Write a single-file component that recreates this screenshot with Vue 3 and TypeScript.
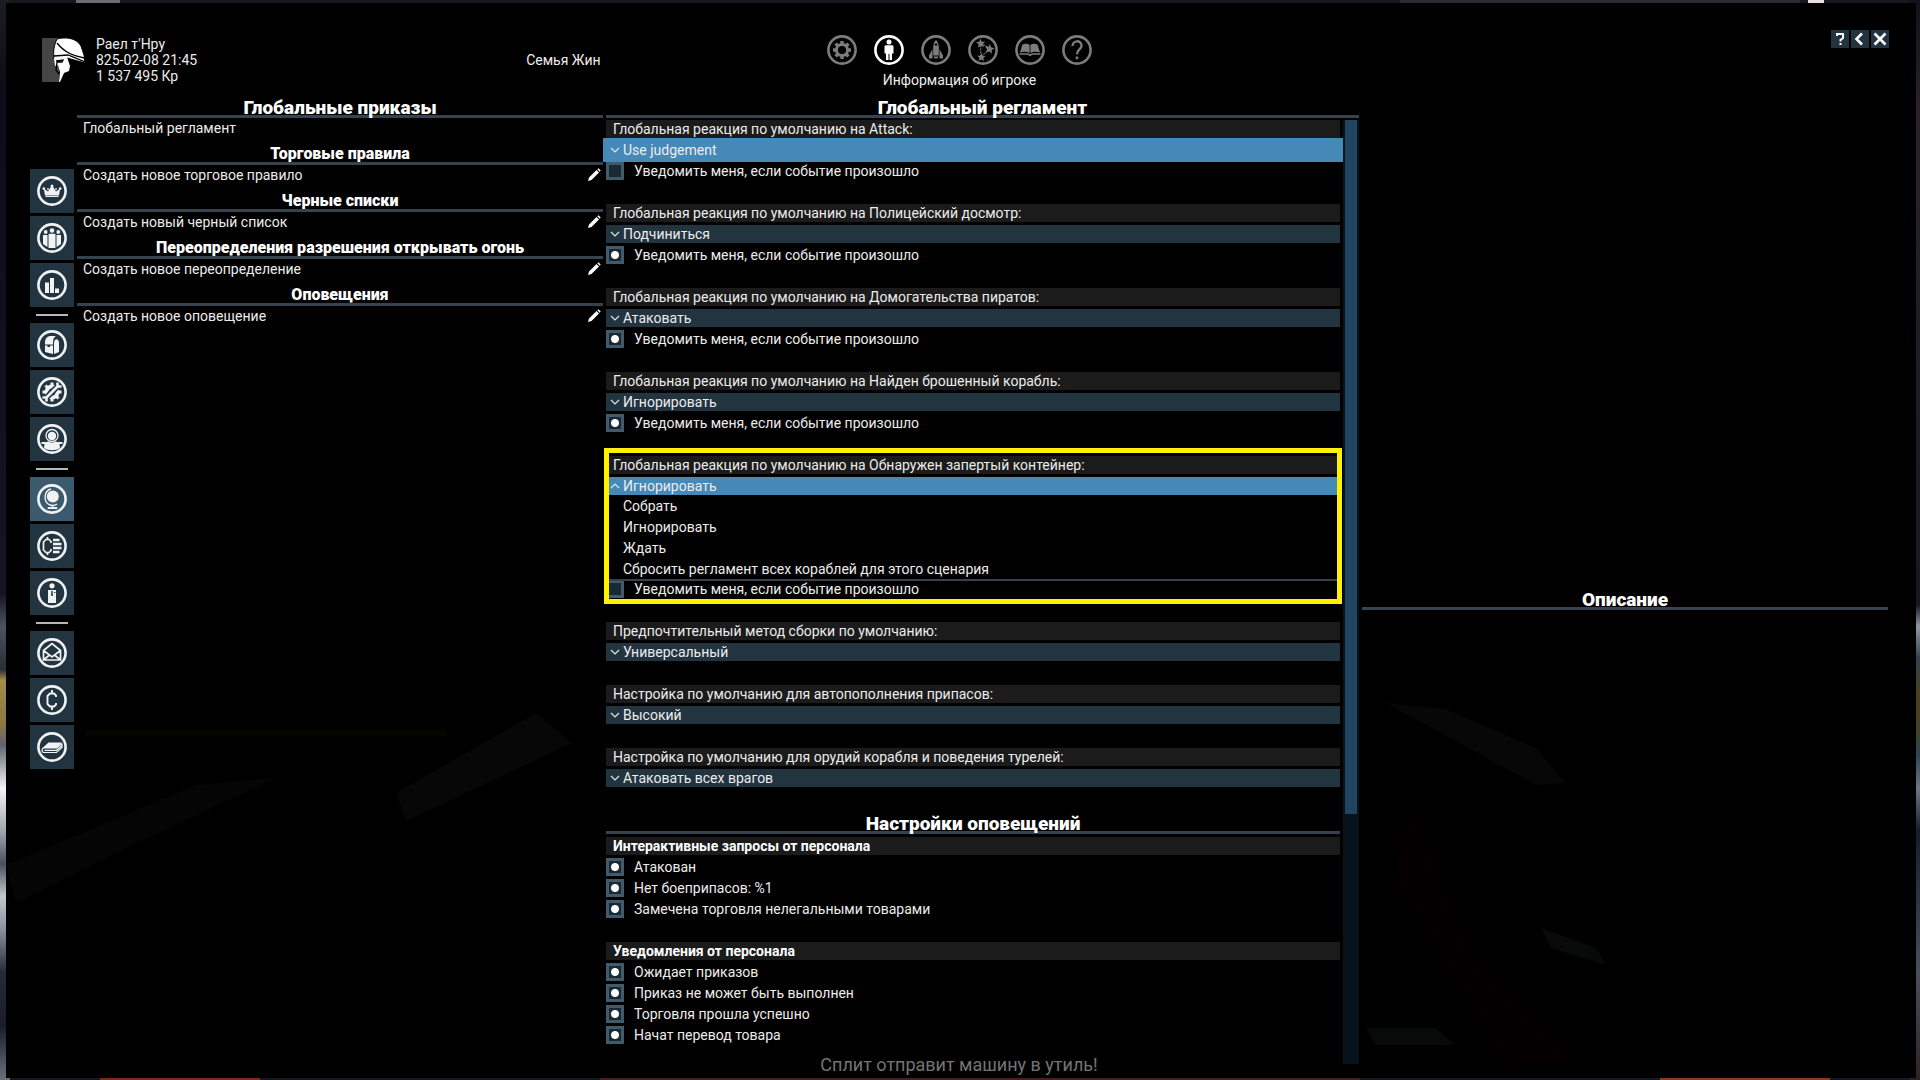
<script setup lang="ts">
import { ref } from 'vue'

interface Rule { heading: string; action: string }
interface Reaction {
  id: string
  label: string
  value: string
  choices: string[]
  notify?: boolean
  hot?: boolean
  open?: boolean
}
interface AlertGroup { title: string; items: { id: string; label: string; on: boolean }[] }

const tabs = [
  { id: 'settings', label: 'Настройки' },
  { id: 'player', label: 'Информация об игроке' },
  { id: 'ship', label: 'Корабль' },
  { id: 'map', label: 'Карта' },
  { id: 'book', label: 'Энциклопедия' },
  { id: 'help', label: 'Справка' },
]
const activeTab = ref('player')

const sidebar = [
  [
    { id: 'crown', label: 'Империя' },
    { id: 'factions', label: 'Фракции' },
    { id: 'stats', label: 'Статистика' },
  ],
  [
    { id: 'inventory', label: 'Инвентарь' },
    { id: 'crafting', label: 'Создание' },
    { id: 'crew', label: 'Внешность' },
  ],
  [
    { id: 'globe', label: 'Глобальные приказы' },
    { id: 'account', label: 'Счета' },
    { id: 'staff', label: 'Персонал' },
  ],
  [
    { id: 'mail', label: 'Сообщения' },
    { id: 'credit', label: 'Транзакции' },
    { id: 'log', label: 'Журнал' },
  ],
]
const activeSide = ref('globe')

const rules: Rule[] = [
  { heading: 'Торговые правила', action: 'Создать новое торговое правило' },
  { heading: 'Черные списки', action: 'Создать новый черный список' },
  { heading: 'Переопределения разрешения открывать огонь', action: 'Создать новое переопределение' },
  { heading: 'Оповещения', action: 'Создать новое оповещение' },
]

const reactions = ref<Reaction[]>([
  { id: 'attack', label: 'Глобальная реакция по умолчанию на Attack:', value: 'Use judgement', choices: ['Use judgement'], notify: false, hot: true },
  { id: 'police', label: 'Глобальная реакция по умолчанию на Полицейский досмотр:', value: 'Подчиниться', choices: ['Подчиниться'], notify: true },
  { id: 'pirates', label: 'Глобальная реакция по умолчанию на Домогательства пиратов:', value: 'Атаковать', choices: ['Атаковать'], notify: true },
  { id: 'ship', label: 'Глобальная реакция по умолчанию на Найден брошенный корабль:', value: 'Игнорировать', choices: ['Игнорировать'], notify: true },
  {
    id: 'lockbox',
    label: 'Глобальная реакция по умолчанию на Обнаружен запертый контейнер:',
    value: 'Игнорировать',
    choices: ['Собрать', 'Игнорировать', 'Ждать', 'Сбросить регламент всех кораблей для этого сценария'],
    notify: false,
    open: true,
  },
  { id: 'build', label: 'Предпочтительный метод сборки по умолчанию:', value: 'Универсальный', choices: ['Универсальный'] },
  { id: 'supply', label: 'Настройка по умолчанию для автопополнения припасов:', value: 'Высокий', choices: ['Высокий'] },
  { id: 'guns', label: 'Настройка по умолчанию для орудий корабля и поведения турелей:', value: 'Атаковать всех врагов', choices: ['Атаковать всех врагов'] },
])

const alerts = ref<AlertGroup[]>([
  {
    title: 'Интерактивные запросы от персонала',
    items: [
      { id: 'attacked', label: 'Атакован', on: true },
      { id: 'ammo', label: 'Нет боеприпасов: %1', on: true },
      { id: 'illegal', label: 'Замечена торговля нелегальными товарами', on: true },
    ],
  },
  {
    title: 'Уведомления от персонала',
    items: [
      { id: 'waiting', label: 'Ожидает приказов', on: true },
      { id: 'failed', label: 'Приказ не может быть выполнен', on: true },
      { id: 'traded', label: 'Торговля прошла успешно', on: true },
      { id: 'transfer', label: 'Начат перевод товара', on: true },
    ],
  },
])
</script>

<template>
  <div class="space">
    <svg class="stars" viewBox="0 0 1920 1080" preserveAspectRatio="none" aria-hidden="true">
      <defs>
        <linearGradient id="glow-left" x1="0" y1="0" x2="0" y2="1">
          <stop offset="0" stop-color="#1c1d24" />
          <stop offset="0.08" stop-color="#0c0d16" />
          <stop offset="0.55" stop-color="#14161f" />
          <stop offset="0.58" stop-color="#4d535e" />
          <stop offset="0.62" stop-color="#2a2d36" />
          <stop offset="0.63" stop-color="#a58c46" />
          <stop offset="0.67" stop-color="#8b7942" />
          <stop offset="0.69" stop-color="#5e6570" />
          <stop offset="0.73" stop-color="#f4f4f6" />
          <stop offset="0.77" stop-color="#9fa4ac" />
          <stop offset="0.8" stop-color="#4a505b" />
          <stop offset="0.83" stop-color="#c4c8ce" />
          <stop offset="0.86" stop-color="#8d939d" />
          <stop offset="0.9" stop-color="#272b35" />
          <stop offset="0.95" stop-color="#1a1d26" />
          <stop offset="1" stop-color="#6b7079" />
        </linearGradient>
        <linearGradient id="glow-right" x1="0" y1="0" x2="0" y2="1">
          <stop offset="0" stop-color="#12121a" />
          <stop offset="0.1" stop-color="#2a2228" />
          <stop offset="0.56" stop-color="#171722" />
          <stop offset="0.58" stop-color="#8f97a2" />
          <stop offset="0.61" stop-color="#33404a" />
          <stop offset="0.64" stop-color="#4c3f26" />
          <stop offset="0.67" stop-color="#45401f" />
          <stop offset="0.7" stop-color="#2b4654" />
          <stop offset="0.73" stop-color="#6f7582" />
          <stop offset="0.77" stop-color="#141c2a" />
          <stop offset="0.9" stop-color="#4a4f5c" />
          <stop offset="1" stop-color="#2c2226" />
        </linearGradient>
      </defs>
      <rect width="1920" height="1080" fill="#16171f" />
      <rect width="10" height="1080" fill="url(#glow-left)" />
      <rect x="1910" width="10" height="1080" fill="url(#glow-right)" />
      <rect x="76" y="0" width="44" height="3" fill="#6c6d74" />
      <rect x="1400" y="0" width="400" height="3" fill="#2c2b31" />
      <rect x="1808" y="0" width="16" height="3" fill="#e6dfe6" />
      <rect x="100" y="1078" width="160" height="2" fill="#7a2a1c" />
      <rect x="600" y="1078" width="760" height="2" fill="#4a1c24" />
      <rect x="1660" y="1078" width="170" height="2" fill="#8a3a20" />
    </svg>

    <div class="panel">
      <svg class="cockpit" viewBox="0 0 1910 1075" preserveAspectRatio="none" aria-hidden="true">
        <path d="M390 790 530 710 566 740 400 818Z" fill="#070707" />
        <path d="M1380 700 1440 706 1530 745 1560 780 1530 782Z" fill="#070707" />
        <path d="M0 862 190 782 270 775 110 850 10 900Z" fill="#050505" />
        <path d="M1360 1025H1430L1450 1042H1370Z M1535 925 1590 945 1600 962 1545 945Z" fill="#080909" />
        <path d="M80 730H440" stroke="#070500" stroke-width="6" />
        <path d="M1400 790 1470 960 1570 1060H1500L1390 880Z" fill="#040001" />
      </svg>

      <header class="top">
        <div class="identity">
          <svg class="portrait" viewBox="0 0 43 44" aria-hidden="true">
            <rect width="17" height="44" fill="#454545" />
            <path d="M15 1C22-1 34-1 39 8L42 17 43 25 25 20 12 21C11 14 12 7 15 1Z" fill="#fff" stroke="#000" stroke-width="1" />
            <path d="M12 20 25 19 28 28 27 33 22 35 18 44H17L18 34 16 27 13 28Z" fill="#fff" />
            <path d="M15 5C23 15 32 18 42 20M12 18 26 17 43 24M14 23 21 22 20 24H15M15 24 14 32 17 36" fill="none" stroke="#000" stroke-width="1.3" />
          </svg>
          <div class="facts">
            <div>Раел т'Нру</div>
            <div>825-02-08 21:45</div>
            <div>1 537 495 Кр</div>
          </div>
          <div class="family">Семья Жин</div>
        </div>

        <div class="middle">
          <nav class="tabs" aria-label="Разделы">
            <button
              v-for="tab in tabs"
              :key="tab.id"
              type="button"
              class="tab"
              :class="{ active: tab.id === activeTab }"
              :aria-label="tab.label"
              @click="activeTab = tab.id"
            >
              <svg viewBox="0 0 30 30">
                <circle cx="15" cy="15" r="13.6" class="ring" />
                <template v-if="tab.id === 'settings'">
                  <circle cx="15" cy="15" r="5.6" fill="none" stroke="currentColor" stroke-width="3" />
                  <path d="M15 6V9M15 21V24M6 15H9M21 15H24M8.6 8.6 10.8 10.8M19.2 19.2 21.4 21.4M8.6 21.4 10.8 19.2M19.2 10.8 21.4 8.6" stroke="currentColor" stroke-width="3.4" />
                </template>
                <template v-else-if="tab.id === 'player'">
                  <circle cx="15" cy="7" r="2.5" />
                  <path d="M11.5 10.3H18.5L19.5 11.3V18.5H18V25H15.5V19H14.5V25H12V18.5H10.5V11.3Z" />
                </template>
                <template v-else-if="tab.id === 'ship'">
                  <path d="M15 5C17 7 17.8 9.5 17.8 12V20.5H12.2V12C12.2 9.500 13 7 15 5Z" />
                  <path d="M13.600 10.500 14 8.500H16L16.400 10.500Z" fill="#000" />
                  <path d="M11.500 14V23.500H8V20.500ZM18.500 14V23.500H22V20.500ZM12.500 21.500H17.500L16.500 23.500H13.500Z" />
                </template>
                <template v-else-if="tab.id === 'map'">
                  <path d="M12.500 8 22 13.500 13 22Z" fill="none" stroke="currentColor" stroke-width="1.100" stroke-dasharray="2 1" />
                  <path d="M12.500 3.500 13.700 6.800 17.200 6.600 14.700 9.200 16 12.300 12.800 10.800 9.800 12.600 10.600 9.200 8 7.200 11.300 6.800Z" />
                  <path d="M22 8.800 23 12.200 26.500 13.300 23.700 15.200 23.800 18.700 21.200 16.500 17.800 17.600 19.100 14.300 17 11.600 20.500 11.800Z" />
                  <path d="M13.500 18 14.600 20.700 17.600 21 15.300 23 16 26 13.400 24.400 10.600 26 11.500 22.900 9.300 20.800 12.300 20.700Z" />
                </template>
                <template v-else-if="tab.id === 'book'">
                  <path d="M5 17.500 7.500 9.500C10 8.300 13 8.500 14.600 10V18C12 16.600 8 16.500 5 17.500ZM25 17.500 22.500 9.500C20 8.300 17 8.500 15.400 10V18C18 16.600 22 16.500 25 17.500Z" />
                  <path d="M4.500 19H13L15 20.300 17 19H25.500" fill="none" stroke="currentColor" stroke-width="1.600" />
                </template>
                <template v-else>
                  <path d="M10.500 11C10.500 4.800 19.500 4.800 19.500 10.800 19.500 14.500 15 14.500 15 19.200" fill="none" stroke="currentColor" stroke-width="2.400" />
                  <rect x="13.700" y="21.500" width="2.600" height="2.800" />
                </template>
              </svg>
            </button>
          </nav>
          <div class="tab-name">Информация об игроке</div>
        </div>

        <div class="window-buttons">
          <button type="button" aria-label="Справка"><svg viewBox="0 0 18 18"><path d="M6 6V4H12V8L9.500 10V11.500M9.500 13V15" /></svg></button>
          <button type="button" aria-label="Назад"><svg viewBox="0 0 18 18"><path d="M11 3.500 5.500 9 11 14.500" class="thick" /></svg></button>
          <button type="button" aria-label="Закрыть"><svg viewBox="0 0 18 18"><path d="M3.500 3.500 14.500 14.500M14.500 3.500 3.500 14.500" class="thick" /></svg></button>
        </div>
      </header>

      <div class="columns">
        <nav class="side" aria-label="Меню игрока">
          <div v-for="(group, g) in sidebar" :key="g" class="side-group">
            <button
              v-for="item in group"
              :key="item.id"
              type="button"
              class="side-button"
              :class="{ active: item.id === activeSide }"
              :aria-label="item.label"
              @click="activeSide = item.id"
            >
              <svg viewBox="0 0 30 30">
                <circle cx="15" cy="15" r="13.600" class="ring" />
                <template v-if="item.id === 'crown'">
                  <path d="M8 19.500 6.800 12.500 11 15.500 14.500 10H15.500L19 15.500 23.200 12.500 22 19.500ZM8.500 20H21.500V21H8.500Z" />
                  <circle cx="15" cy="10" r="1.500" /><circle cx="6.800" cy="12.600" r="1.300" /><circle cx="23.200" cy="12.600" r="1.300" />
                  <circle cx="11" cy="13" r="0.900" /><circle cx="19" cy="13" r="0.900" />
                </template>
                <template v-else-if="item.id === 'factions'">
                  <circle cx="15" cy="7.500" r="2.300" /><circle cx="8.700" cy="9" r="1.900" /><circle cx="21.300" cy="9" r="1.900" />
                  <path d="M12 10.700H18L18.500 11.500V25H11.500V11.500ZM6 12H10.500V24L6 21ZM24 12H19.500V24L24 21Z" />
                </template>
                <template v-else-if="item.id === 'stats'">
                  <path d="M8 12.500H12V23H8ZM13 8H17V23H13ZM18 18.500H22V23H18Z" />
                </template>
                <template v-else-if="item.id === 'inventory'">
                  <path d="M8 13C8 8.500 10 6.500 13 6H19C16.500 7.500 16 9.500 16 13V14.500H8ZM17 13C17 8 22 8 22 13V22L17 24ZM8 15.500H10.500V17H13V15.500H16V24L8 22Z" />
                </template>
                <template v-else-if="item.id === 'crafting'">
                  <circle cx="15" cy="15" r="5.500" fill="none" stroke="currentColor" stroke-width="4" />
                  <path d="M15 5.500V9M15 21V24.500M8.500 8.500 11 11M19 19 21.500 21.500M5.500 15H9M21 15H24.500" stroke="currentColor" stroke-width="3" />
                  <path d="M7 23 23 7" stroke="#223440" stroke-width="6" />
                  <path d="M9.500 20.500 20.500 9.500M5.500 20.500H9.500V24.500M20.500 5.500V9.500H24.500" fill="none" stroke="currentColor" stroke-width="2.600" />
                </template>
                <template v-else-if="item.id === 'crew'">
                  <circle cx="15" cy="11.500" r="6" fill="none" stroke="currentColor" stroke-width="1.300" />
                  <circle cx="15" cy="12" r="4.200" />
                  <path d="M15 2V6M4.500 18H9.500L11.500 17.500C13.500 19 16.500 19 18.500 17.500L20.500 18H25.500V20H22.500L23 24C19 27 11 27 7 24L7.500 20H4.500Z" />
                </template>
                <template v-else-if="item.id === 'globe'">
                  <circle cx="15.800" cy="12.500" r="6" />
                  <path d="M14 5C6.500 7 6.500 17.500 12 20.500 14.500 21.700 18 21.500 20 20M15.500 21V23.500" fill="none" stroke="currentColor" stroke-width="1.400" />
                  <path d="M11 23H20L20.500 25H10.500Z" />
                </template>
                <template v-else-if="item.id === 'account'">
                  <path d="M14 12V10.500L12 8.500H9L6.500 11V19L9 21.500H12L14 19.500V18M10.500 6V8.500M10.500 21.500V24" fill="none" stroke="currentColor" stroke-width="1.700" />
                  <path d="M16 9H22.500M16 13H24.500M16 17H24.500M16 21H22.500" stroke="currentColor" stroke-width="2.400" />
                </template>
                <template v-else-if="item.id === 'staff'">
                  <circle cx="15" cy="7.800" r="2.600" />
                  <path d="M11 12H19V25H11Z" />
                  <path d="M15 13 14.500 17 15 18 15.500 17ZM17 14.500H18.500" fill="none" stroke="#223440" stroke-width="0.900" />
                </template>
                <template v-else-if="item.id === 'mail'">
                  <path d="M6.500 12.500 15 5.500 23.500 12.500V22H6.500ZM6.500 12.500 15 19 23.500 12.500M6.500 22 12.500 17M23.500 22 17.500 17" fill="none" stroke="currentColor" stroke-width="1.700" />
                </template>
                <template v-else-if="item.id === 'credit'">
                  <path d="M19 12V10.500L17 8.500H13L10.500 11V19L13 21.500H17L19 19.500V18M15 5V8.500M15 21.500V25" fill="none" stroke="currentColor" stroke-width="1.900" />
                </template>
                <template v-else>
                  <path d="M5.500 16 11.500 10.500H25L19.500 16Z" />
                  <path d="M25 11.500V15.500L19.500 20.500H7C4.500 20.500 4.500 16 7 16H19.500L25 11.500M7.500 18.300H19.500L25 13.500" fill="none" stroke="currentColor" stroke-width="1.200" />
                </template>
              </svg>
            </button>
          </div>
        </nav>

        <section class="orders">
          <h2 class="title">Глобальные приказы</h2>
          <a href="#" class="order" @click.prevent>Глобальный регламент</a>
          <template v-for="rule in rules" :key="rule.heading">
            <h3 class="title small">{{ rule.heading }}</h3>
            <a href="#" class="order" @click.prevent>
              <span>{{ rule.action }}</span>
              <svg class="pencil" viewBox="0 0 14 14" aria-hidden="true">
                <path d="M1 13 2 9.500 9.500 2 12 4.500 4.500 12ZM10.300 1.300 11.500 0.300 13.700 2.500 12.700 3.700Z" />
              </svg>
            </a>
          </template>
        </section>

        <main class="rules">
          <h2 class="title">Глобальный регламент</h2>
          <div class="scroller">
            <div class="list">
              <section v-for="r in reactions" :key="r.id" class="reaction" :class="{ framed: r.open }">
                <label class="caption" :for="r.id">{{ r.label }}</label>
                <div v-if="!r.open" class="drop" :class="{ hot: r.hot }">
                  <select :id="r.id" v-model="r.value">
                    <option v-for="c in r.choices" :key="c">{{ c }}</option>
                  </select>
                  <svg class="chevron" viewBox="0 0 10 6" aria-hidden="true"><path d="M1 1 5 5 9 1" /></svg>
                </div>
                <div v-else class="drop open">
                  <button :id="r.id" type="button" class="current" aria-expanded="true">{{ r.value }}</button>
                  <svg class="chevron" viewBox="0 0 10 6" aria-hidden="true"><path d="M1 5 5 1 9 5" /></svg>
                  <ul class="choices">
                    <li v-for="c in r.choices" :key="c">
                      <button type="button" @click="r.value = c">{{ c }}</button>
                    </li>
                  </ul>
                </div>
                <label v-if="r.notify !== undefined" class="check">
                  <input v-model="r.notify" type="checkbox" />
                  <span>Уведомить меня, если событие произошло</span>
                </label>
              </section>

              <h2 class="title alerts-title">Настройки оповещений</h2>
              <fieldset v-for="group in alerts" :key="group.title" class="alerts">
                <legend class="caption bold">{{ group.title }}</legend>
                <label v-for="item in group.items" :key="item.id" class="check">
                  <input v-model="item.on" type="checkbox" />
                  <span>{{ item.label }}</span>
                </label>
              </fieldset>
            </div>
            <div class="track"><div class="thumb"></div></div>
          </div>
        </main>

        <aside class="details">
          <h2 class="title">Описание</h2>
        </aside>
      </div>

      <footer class="hint">Сплит отправит машину в утиль!</footer>
    </div>
  </div>
</template>

<style>
body {
  margin: 0;
  background: #000;
}
</style>

<style scoped>
.space {
  position: relative;
  box-sizing: border-box;
  min-height: 100vh;
  padding: 3px 4px 2px 6px;
  display: flex;
  overflow: hidden;
  font-family: Roboto, "Liberation Sans", sans-serif;
  font-size: 14px;
  line-height: 18px;
  color: #ececec;
}
.stars,
.cockpit {
  position: absolute;
  inset: 0;
  width: 100%;
  height: 100%;
}
.panel {
  position: relative;
  box-sizing: border-box;
  flex: 1;
  min-width: 0;
  display: flex;
  flex-direction: column;
  padding: 27px 28px 2px 24px;
  background: #000;
}
button,
select {
  margin: 0;
  padding: 0;
  border: 0;
  border-radius: 0;
  background: none;
  color: inherit;
  font: inherit;
  text-align: left;
}
.ring {
  fill: none;
  stroke: currentColor;
  stroke-width: 2.6;
}

/* header */
.top {
  position: relative;
  display: grid;
  grid-template-columns: 571fr 718fr 571fr;
  height: 65px;
  margin-right: -1px;
}
.identity {
  display: flex;
  align-items: flex-start;
  padding: 6px 0 0 12px;
}
.portrait {
  width: 43px;
  height: 44px;
  margin-top: 2px;
}
.facts {
  margin-left: 11px;
  line-height: 16px;
}
.family {
  margin-left: auto;
  margin-top: 16px;
  line-height: 16px;
}
.middle {
  display: flex;
  flex-direction: column;
  align-items: center;
  padding-top: 5px;
}
.tabs {
  display: flex;
  gap: 17px;
}
.tab {
  width: 30px;
  height: 30px;
  color: #7c7c7c;
}
.tab.active {
  color: #fff;
}
.tab svg,
.side-button svg {
  display: block;
  width: 30px;
  height: 30px;
  fill: currentColor;
}
.tab-name {
  margin-top: 6px;
}
.window-buttons {
  display: flex;
  justify-content: flex-end;
  gap: 2px;
}
.window-buttons button {
  width: 18px;
  height: 18px;
  background: #223440;
}
.window-buttons svg {
  display: block;
  fill: none;
  stroke: #fff;
  stroke-width: 2;
}
.window-buttons .thick {
  stroke-width: 2.6;
}

/* columns */
.columns {
  position: relative;
  flex: 1;
  display: grid;
  grid-template-columns: 44px minmax(0, 526fr) minmax(0, 753fr) minmax(0, 526fr);
  column-gap: 3px;
}
.side {
  display: flex;
  flex-direction: column;
  padding-top: 74px;
}
.side-group {
  display: flex;
  flex-direction: column;
  gap: 3px;
}
.side-group + .side-group::before {
  content: "";
  width: 32px;
  height: 2px;
  margin: 4px auto;
  background: #b4b8ba;
}
.side-group + .side-group {
  margin-top: 3px;
}
.side-button {
  width: 44px;
  height: 44px;
  padding: 7px;
  background: #223440;
  color: #f0f2f3;
}
.side-button.active {
  background: #3c5a6e;
}
.title {
  margin: 0 0 1px;
  height: 20px;
  border-bottom: 3px solid #36434f;
  font-size: 19px;
  line-height: 25px;
  font-weight: 900;
  text-align: center;
  color: #fff;
  white-space: nowrap;
}
.title.small {
  height: 19px;
  font-size: 16px;
  line-height: 22px;
}
.order {
  display: flex;
  justify-content: space-between;
  align-items: center;
  height: 18px;
  margin-bottom: 6px;
  padding: 0 2px 0 6px;
  color: inherit;
  text-decoration: none;
}
.pencil {
  width: 14px;
  height: 14px;
  fill: #fff;
}

.rules {
  display: flex;
  flex-direction: column;
}
.rules > .title {
  margin-bottom: 2px;
}
.scroller {
  flex: 1;
  display: flex;
}
.list {
  flex: 1;
  min-width: 0;
}
.track {
  width: 16px;
  box-sizing: border-box;
  padding: 0 2px;
  background: #06131b;
}
.thumb {
  height: 73.5%;
  background: #214560;
}
.caption {
  display: block;
  height: 18px;
  padding: 0 7px;
  background: #1b1b1b;
}
.bold {
  font-weight: 700;
  color: #fff;
}
.reaction {
  position: relative;
  display: flex;
  flex-direction: column;
  gap: 3px;
  margin: 0 3px 24px 0;
}
.drop {
  position: relative;
  background: #223440;
}
.drop select,
.current {
  display: block;
  width: 100%;
  height: 18px;
  padding-left: 17px;
  appearance: none;
}
.chevron {
  position: absolute;
  left: 4px;
  top: 6px;
  width: 10px;
  height: 6px;
  fill: none;
  stroke: #dfe6ea;
  stroke-width: 1.2;
  pointer-events: none;
}
.drop.hot {
  z-index: 1;
  background: #4589b9;
  box-shadow: 0 0 0 3px #4589b9;
}
.drop.open {
  background: none;
}
.current {
  background: #4589b9;
}
.choices {
  margin: 0;
  padding: 0;
  list-style: none;
  border-bottom: 2px solid #36434f;
}
.choices button {
  display: block;
  width: 100%;
  height: 21px;
  padding-left: 17px;
}
.drop.open + .check {
  margin-top: -4px;
}
.framed::after {
  content: "";
  position: absolute;
  inset: -8px -2px -6px;
  border: 5px solid #fff200;
  pointer-events: none;
}
.check {
  display: flex;
  align-items: center;
  height: 18px;
}
.check input {
  appearance: none;
  box-sizing: border-box;
  width: 18px;
  height: 18px;
  margin: 0 10px 0 0;
  border: 3px solid #415b6b;
  background: #1a2a35;
}
.check input:checked {
  background: radial-gradient(circle, #fff 0 3.5px, #1a2a35 4.5px);
}
.alerts-title {
  margin: 24px 3px 3px 0;
}
.alerts {
  display: flex;
  flex-direction: column;
  gap: 3px;
  margin: 0 3px 24px 0;
  padding: 0;
  border: 0;
}
.alerts:last-child {
  margin-bottom: 0;
}
.alerts .caption {
  width: 100%;
  box-sizing: border-box;
  margin-bottom: 3px;
}
.details {
  padding-top: 492px;
}

.hint {
  position: relative;
  margin-top: -11px;
  font-size: 18px;
  line-height: 23px;
  text-align: center;
  color: #747474;
}
</style>
